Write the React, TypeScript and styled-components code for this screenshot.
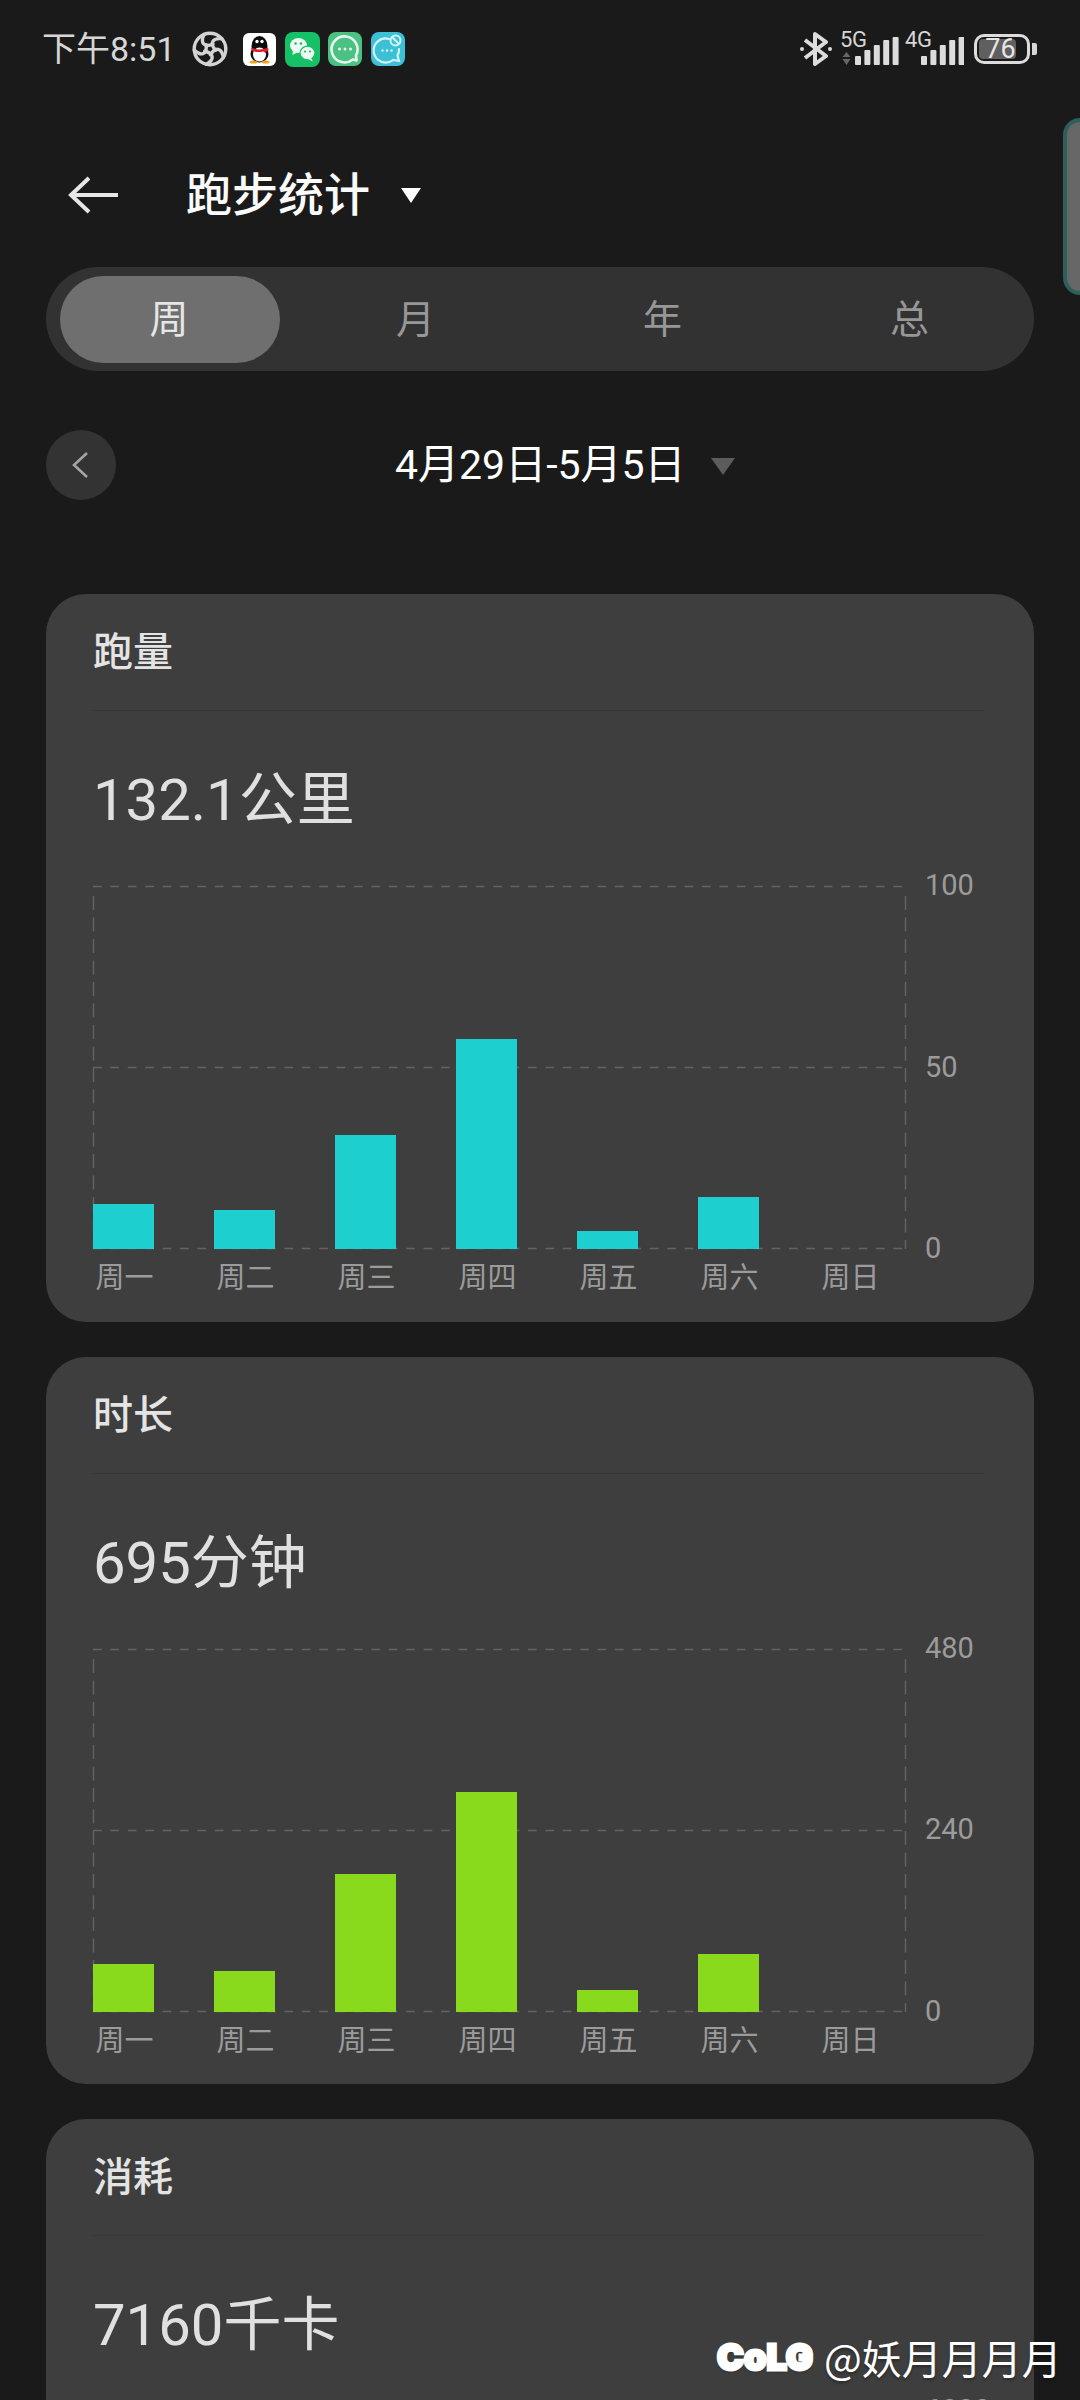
import React from "react";
import styled, { createGlobalStyle } from "styled-components";

const SANS = `Roboto, "Noto Sans CJK SC", sans-serif`;

const Global = createGlobalStyle`
  html, body { margin: 0; padding: 0; background: #1a1a1a; }
  body { font-family: ${SANS}; }
`;

const Page = styled.div`
  position: relative;
  width: 1080px;
  height: 2400px;
  overflow: hidden;
  background: #1a1a1a;
`;

/* status bar */
const StatusBar = styled.div`
  height: 96px;
  padding: 2px 43px 0 42px;
  box-sizing: border-box;
  display: flex;
  align-items: center;
  justify-content: space-between;
`;
const StatusLeft = styled.div`
  display: flex;
  align-items: center;
`;
const Clock = styled.span`
  width: 132px;
  font-size: 34px;
  line-height: 40px;
  color: #d6d6d6;
  white-space: nowrap;
`;
const Pinwheel = styled.svg`
  width: 36px;
  height: 36px;
  margin-left: 18px;
  margin-right: 15px;
`;
const AppIcon = styled.span<{ $bg: string; $size: number; $gap: number; $r: number }>`
  display: flex;
  width: ${(p) => p.$size}px;
  height: ${(p) => p.$size}px;
  margin-right: ${(p) => p.$gap}px;
  border-radius: ${(p) => p.$r}px;
  background: ${(p) => p.$bg};
  overflow: hidden;
  svg { width: 100%; height: 100%; }
`;
const StatusRight = styled.div`
  display: flex;
  align-items: center;
`;
const BtIcon = styled.svg`
  width: 32px;
  height: 34px;
  margin-right: 10px;
`;
const Signal = styled.div<{ $w: number; $gap: number }>`
  position: relative;
  width: ${(p) => p.$w}px;
  height: 34px;
  margin-right: ${(p) => p.$gap}px;
  svg { display: block; width: 100%; height: 100%; }
`;
const NetLabel = styled.span`
  position: absolute;
  left: -2px;
  top: -3px;
  font-size: 22px;
  line-height: 22px;
  letter-spacing: -0.4px;
  color: #d6d6d6;
`;
const Battery = styled.div`
  position: relative;
  width: 56px;
  height: 30px;
  box-sizing: border-box;
  border: 3px solid #dcdcdc;
  border-radius: 10px;
  display: flex;
  align-items: center;
  justify-content: center;
`;
const BatteryFill = styled.span`
  position: absolute;
  left: 2px;
  top: 2px;
  bottom: 2px;
  width: 37px;
  border-radius: 4px;
  background: #5f5f5f;
`;
const BatteryText = styled.span`
  position: relative;
  font-size: 27px;
  line-height: 24px;
  color: #e6e6e6;
  margin-left: -3px;
`;
const BatteryNub = styled.span`
  width: 5px;
  height: 12px;
  margin-left: 2px;
  border-radius: 0 2px 2px 0;
  background: #d6d6d6;
`;

/* floating side tab */
const SidePeek = styled.div`
  position: absolute;
  right: 0;
  top: 118px;
  width: 17px;
  height: 177px;
  box-sizing: border-box;
  background: #676767;
  border: 4px solid #2f5f5b;
  border-right: 0;
  border-radius: 20px 0 0 20px;
`;

/* header */
const Header = styled.div`
  height: 76px;
  margin-top: 61px;
  padding-left: 68px;
  display: flex;
  align-items: center;
`;
const BackArrow = styled.svg`
  width: 50px;
  height: 38px;
  margin-right: 68px;
`;
const Title = styled.h1`
  margin: 0;
  font-size: 46px;
  font-weight: 500;
  line-height: 60px;
  color: #fbfbfb;
`;
const TitleCaret = styled.span`
  width: 0;
  height: 0;
  margin-left: 31px;
  border-left: 10px solid transparent;
  border-right: 10px solid transparent;
  border-top: 15px solid #fff;
`;

/* tabs */
const Tabs = styled.div`
  margin: 34px 46px 0;
  height: 104px;
  box-sizing: border-box;
  padding: 9px 0;
  display: grid;
  grid-template-columns: repeat(4, 1fr);
  align-items: center;
  background: #323232;
  border-radius: 52px;
`;
const Tab = styled.div<{ $active?: boolean }>`
  display: flex;
  align-items: center;
  justify-content: center;
  height: 87px;
  box-sizing: border-box;
  padding: 2px 2px 0 0;
  font-size: 39px;
  line-height: 85px;
  color: ${(p) => (p.$active ? "#e6e6e6" : "#979797")};
  ${(p) =>
    p.$active &&
    `
    background: #6f6f6f;
    border-radius: 44px;
    width: 220px;
    margin-left: 14px;
  `}
`;

/* date row */
const DateRow = styled.div`
  margin: 59px 46px 0;
  height: 70px;
  display: flex;
  align-items: center;
`;
const PrevButton = styled.div`
  width: 70px;
  height: 70px;
  border-radius: 50%;
  background: #333;
  display: flex;
  align-items: center;
  justify-content: center;
  svg { width: 18px; height: 26px; margin-left: -2px; }
`;
const DateText = styled.span`
  margin-left: 279px;
  font-size: 41px;
  line-height: 50px;
  color: #fff;
  white-space: nowrap;
`;
const DateCaret = styled.span`
  width: 0;
  height: 0;
  margin-left: 25px;
  margin-top: 2px;
  border-left: 12px solid transparent;
  border-right: 12px solid transparent;
  border-top: 17px solid #5c5c5c;
`;

/* cards */
const Cards = styled.div`
  margin: 94px 46px 0;
  display: flex;
  flex-direction: column;
  gap: 35px;
`;
const Card = styled.section`
  flex: none;
  height: 727.5px;
  box-sizing: border-box;
  padding: 0 49px 0 47px;
  background: #3e3e3e;
  border-radius: 40px;
`;
const CardTitle = styled.h2`
  margin: 0;
  height: 117px;
  box-sizing: border-box;
  padding-bottom: 6px;
  display: flex;
  align-items: center;
  border-bottom: 1px solid #373737;
  font-size: 40px;
  font-weight: 500;
  color: #e4e4e4;
`;
const Value = styled.div`
  height: 175px;
  box-sizing: border-box;
  padding-top: 3px;
  display: flex;
  align-items: center;
  font-size: 58px;
  line-height: 80px;
  color: #e0e0e0;
`;
const ChartRow = styled.div`
  display: flex;
  align-items: flex-start;
`;
const ChartMain = styled.div`
  width: 813px;
  flex: none;
`;
const Plot = styled.div`
  position: relative;
  height: 363px;
`;
const GridSvg = styled.svg`
  display: block;
  width: 813px;
  height: 363px;
  overflow: visible;
`;
const Bars = styled.div`
  position: absolute;
  inset: 0;
  display: flex;
  align-items: flex-end;
  gap: 60px;
`;
const Bar = styled.div<{ $h: number; $color: string }>`
  width: 61px;
  flex: none;
  height: ${(p) => p.$h}px;
  background: ${(p) => p.$color};
`;
const XAxis = styled.div`
  margin-top: 11px;
  padding-left: 1px;
  display: flex;
  gap: 60px;
`;
const XLabel = styled.span`
  width: 61px;
  flex: none;
  display: flex;
  justify-content: center;
  font-size: 29px;
  line-height: 36px;
  color: #9b9b9b;
  white-space: nowrap;
`;
const YAxis = styled.div`
  height: 399px;
  margin: -19px 0 0 19px;
  display: flex;
  flex-direction: column;
  justify-content: space-between;
`;
const YLabel = styled.span`
  font-size: 29px;
  line-height: 36px;
  color: #9b9b9b;
`;

/* watermark */
const Watermark = styled.div`
  position: absolute;
  left: 717px;
  top: 2332px;
  display: flex;
  align-items: center;
  height: 50px;
  color: #fff;
  text-shadow: 0 2px 3px rgba(0, 0, 0, 0.35);
`;
const WatermarkLogo = styled.span`
  width: 100px;
  margin-right: 7px;
  font-family: Inter, sans-serif;
  font-size: 36px;
  font-weight: 900;
  -webkit-text-stroke: 3px #fff;
  white-space: nowrap;
`;
const WatermarkName = styled.span`
  font-family: "Noto Sans CJK SC", sans-serif;
  font-size: 40px;
  font-weight: 400;
  line-height: 50px;
  white-space: nowrap;
`;

const DAYS = ["周一", "周二", "周三", "周四", "周五", "周六", "周日"];

type CardData = {
  title: string;
  value: string;
  color: string;
  ticks: string[];
  bars: number[];
};

const CARDS: CardData[] = [
  { title: "跑量", value: "132.1公里", color: "#1ecfcf", ticks: ["100", "50", "0"], bars: [45, 39, 114, 210, 18, 52, 0] },
  { title: "时长", value: "695分钟", color: "#89da1d", ticks: ["480", "240", "0"], bars: [48, 41, 138, 220, 22, 58, 0] },
  { title: "消耗", value: "7160千卡", color: "#f5a623", ticks: ["6000", "3000", "0"], bars: [50, 44, 130, 215, 20, 55, 0] },
];

const Grid = () => (
  <GridSvg viewBox="0 0 813 363">
    <g stroke="#636363" strokeWidth="1.4" fill="none">
      <path d="M0 0.5H813M0 181.5H813M0 362.5H813" strokeDasharray="8.7 8.7" />
      <path d="M0.5 10V363M812.5 10V363" strokeDasharray="14 7.5" />
    </g>
  </GridSvg>
);

function SignalGroup({ x0 }: { x0: number }) {
  return (
    <>
      {[9, 15, 20, 25, 28].map((h, i) => (
        <rect key={h} x={x0 + i * 9.4} y={33 - h} width="6" height={h} rx="1" fill="#dcdcdc" />
      ))}
    </>
  );
}

const ChartCard = ({ data }: { data: CardData }) => (
  <Card>
    <CardTitle>{data.title}</CardTitle>
    <Value>{data.value}</Value>
    <ChartRow>
      <ChartMain>
        <Plot>
          <Grid />
          <Bars>
            {data.bars.map((h, i) => (
              <Bar key={DAYS[i]} $h={h} $color={data.color} />
            ))}
          </Bars>
        </Plot>
        <XAxis>
          {DAYS.map((d) => (
            <XLabel key={d}>{d}</XLabel>
          ))}
        </XAxis>
      </ChartMain>
      <YAxis>
        {data.ticks.map((t) => (
          <YLabel key={t}>{t}</YLabel>
        ))}
      </YAxis>
    </ChartRow>
  </Card>
);

export default function App() {
  return (
    <Page>
      <Global />
      <StatusBar>
        <StatusLeft>
          <Clock>下午8:51</Clock>
          <Pinwheel viewBox="0 0 36 36" fill="none" stroke="#d4d4d4" strokeWidth="3.4">
            <circle cx="18" cy="18" r="15.8" />
            {[0, 72, 144, 216, 288].map((a) => (
              <path key={a} d="M12 3.5C8 12 12 17 21 13" strokeLinecap="round" transform={`rotate(${a} 18 18)`} />
            ))}
          </Pinwheel>
          <AppIcon $bg="#ffffff" $size={33} $gap={9} $r={6}>
            <svg viewBox="0 0 33 33">
              <ellipse cx="16.5" cy="13" rx="8" ry="10" fill="#0b0b0b" />
              <ellipse cx="16.5" cy="21" rx="9" ry="8.5" fill="#111" />
              <ellipse cx="16.5" cy="21.5" rx="6.5" ry="7" fill="#fff" />
              <circle cx="14" cy="8.5" r="1.7" fill="#fff" />
              <circle cx="19" cy="8.5" r="1.7" fill="#fff" />
              <path d="M8 14.5C13 17 20 17 25 14.5L25.5 17.5L23 18.5L23.5 21L20.5 18.5C16 19.5 12 19.2 8.5 17.5Z" fill="#e0202a" />
              <ellipse cx="10.5" cy="29" rx="4" ry="1.6" fill="#f2a516" />
              <ellipse cx="22.5" cy="29" rx="4" ry="1.6" fill="#f2a516" />
            </svg>
          </AppIcon>
          <AppIcon $bg="#15c066" $size={35} $gap={8} $r={8}>
            <svg viewBox="0 0 35 35">
              <ellipse cx="13.5" cy="13.5" rx="8.5" ry="7.5" fill="#eefaf1" />
              <path d="M8 18L7.5 23L13 20Z" fill="#eefaf1" />
              <ellipse cx="22.5" cy="21" rx="7.5" ry="6.8" fill="#eefaf1" stroke="#15c066" strokeWidth="1.2" />
              <path d="M26 26L28 29.5L23 27Z" fill="#eefaf1" />
              <circle cx="10.5" cy="11.5" r="1.3" fill="#15c066" />
              <circle cx="16" cy="11.5" r="1.3" fill="#15c066" />
              <circle cx="20" cy="19.5" r="1.1" fill="#15c066" />
              <circle cx="25" cy="19.5" r="1.1" fill="#15c066" />
            </svg>
          </AppIcon>
          <AppIcon $bg="#4cc184" $size={34} $gap={9} $r={8}>
            <svg viewBox="0 0 34 34">
              <path d="M28.5 28.5L24.8 27.4A13 13 0 1 1 28 23.5Z" fill="none" stroke="#e4f7ec" strokeWidth="2.6" strokeLinejoin="round" />
              <circle cx="11.5" cy="17" r="1.5" fill="#e4f7ec" />
              <circle cx="17" cy="17" r="1.5" fill="#e4f7ec" />
              <circle cx="22.5" cy="17" r="1.5" fill="#e4f7ec" />
            </svg>
          </AppIcon>
          <AppIcon $bg="#3cc0d6" $size={34} $gap={0} $r={8}>
            <svg viewBox="0 0 34 34">
              <path d="M18 7A12 12 0 1 0 22 28L28 29L26.5 23.5A12 12 0 0 0 28 17" fill="none" stroke="#d4f3f8" strokeWidth="2.2" strokeLinecap="round" />
              <circle cx="11.5" cy="18.5" r="1.2" fill="#d4f3f8" />
              <circle cx="16" cy="18.5" r="1.2" fill="#d4f3f8" />
              <circle cx="20.5" cy="18.5" r="1.2" fill="#d4f3f8" />
              <circle cx="24.5" cy="8.5" r="5" fill="none" stroke="#d4f3f8" strokeWidth="2" />
              <path d="M21 5L28 12" stroke="#d4f3f8" strokeWidth="2" />
            </svg>
          </AppIcon>
        </StatusLeft>
        <StatusRight>
          <BtIcon viewBox="0 0 32 34" fill="none" stroke="#dcdcdc" strokeWidth="4" strokeLinejoin="round">
            <path d="M5 8L26 24L15 32V2L26 10L5 26" />
            <circle cx="2" cy="17" r="2" fill="#dcdcdc" stroke="none" />
            <circle cx="30" cy="17" r="2" fill="#dcdcdc" stroke="none" />
          </BtIcon>
          <Signal $w={57} $gap={8}>
            <NetLabel>5G</NetLabel>
            <svg viewBox="0 0 57 34">
              <path d="M4.5 20L8.5 25H0.5ZM4.5 33L0.5 27H8.5Z" fill="#666" />
              <SignalGroup x0={13} />
            </svg>
          </Signal>
          <Signal $w={57} $gap={10}>
            <NetLabel>4G</NetLabel>
            <svg viewBox="0 0 57 34">
              <SignalGroup x0={14} />
            </svg>
          </Signal>
          <Battery>
            <BatteryFill />
            <BatteryText>76</BatteryText>
          </Battery>
          <BatteryNub />
        </StatusRight>
      </StatusBar>
      <SidePeek />
      <Header>
        <BackArrow viewBox="0 0 50 38" fill="none" stroke="#e6e6e6" strokeWidth="4">
          <path d="M50 19H3M21 2L3 19L21 36" />
        </BackArrow>
        <Title>跑步统计</Title>
        <TitleCaret />
      </Header>
      <Tabs>
        <Tab $active>周</Tab>
        <Tab>月</Tab>
        <Tab>年</Tab>
        <Tab>总</Tab>
      </Tabs>
      <DateRow>
        <PrevButton>
          <svg viewBox="0 0 18 26" fill="none" stroke="#a6a6a6" strokeWidth="2.5">
            <path d="M16 1L3 13L16 25" />
          </svg>
        </PrevButton>
        <DateText>4月29日-5月5日</DateText>
        <DateCaret />
      </DateRow>
      <Cards>
        {CARDS.map((c) => (
          <ChartCard key={c.title} data={c} />
        ))}
      </Cards>
      <Watermark>
        <WatermarkLogo>CoLG</WatermarkLogo>
        <WatermarkName>@妖月月月月</WatermarkName>
      </Watermark>
    </Page>
  );
}
